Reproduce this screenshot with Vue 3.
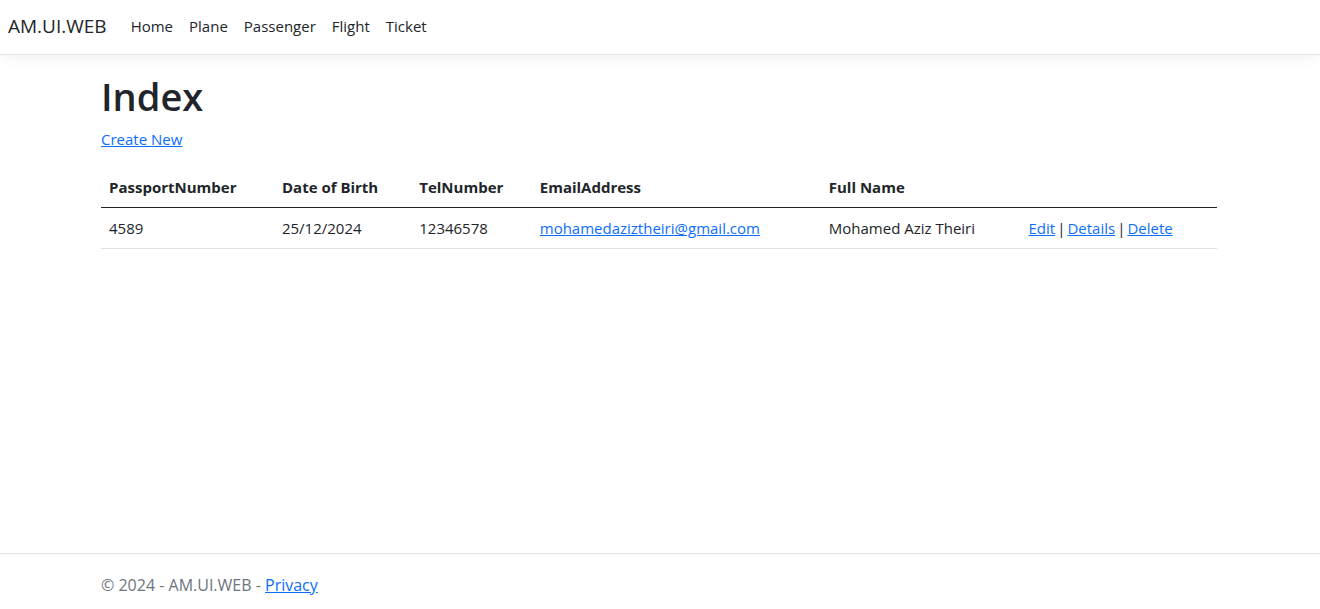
<script setup>
const links = ['Home', 'Plane', 'Passenger', 'Flight', 'Ticket']
const columns = ['PassportNumber', 'Date of Birth', 'TelNumber', 'EmailAddress', 'Full Name', '']
const passengers = [
  {
    passport: '4589',
    birth: '25/12/2024',
    tel: '12346578',
    email: 'mohamedaziztheiri@gmail.com',
    name: 'Mohamed Aziz Theiri',
  },
]
</script>

<template>
  <div class="page">
    <header class="header">
      <nav class="navbar">
        <a class="brand" href="#">AM.UI.WEB</a>
        <ul class="nav">
          <li v-for="link in links" :key="link"><a href="#">{{ link }}</a></li>
        </ul>
      </nav>
    </header>

    <main class="container">
      <h1>Index</h1>
      <p class="create"><a href="#">Create New</a></p>
      <table>
        <colgroup>
          <col class="c-passport" /><col class="c-birth" /><col class="c-tel" />
          <col class="c-email" /><col class="c-name" /><col />
        </colgroup>
        <thead>
          <tr>
            <th v-for="column in columns" :key="column" scope="col">{{ column }}</th>
          </tr>
        </thead>
        <tbody>
          <tr v-for="p in passengers" :key="p.passport">
            <td>{{ p.passport }}</td>
            <td>{{ p.birth }}</td>
            <td>{{ p.tel }}</td>
            <td><a :href="'mailto:' + p.email">{{ p.email }}</a></td>
            <td>{{ p.name }}</td>
            <td>
              <div class="actions"><a href="#">Edit</a> | <a href="#">Details</a> | <a href="#">Delete</a></div>
            </td>
          </tr>
        </tbody>
      </table>
    </main>

    <footer class="footer">
      <div class="container">© 2024 - AM.UI.WEB - <a href="#">Privacy</a></div>
    </footer>
  </div>
</template>

<style>
body {
  margin: 0;
  background: #fff;
}
</style>

<style scoped>
.page {
  display: flex;
  flex-direction: column;
  min-height: 100vh;
  color: #212529;
  font: 15px/24px "Open Sans", "Noto Sans", sans-serif;
}
a {
  color: #0d6efd;
}
.header {
  border-bottom: 1px solid #dee2e6;
  box-shadow: 0 4px 12px rgba(0, 0, 0, 0.05);
}
.navbar {
  display: flex;
  align-items: center;
  gap: 16px;
  padding: 6px 8px 8px;
}
.navbar a {
  text-decoration: none;
  color: #212529;
}
.navbar .brand {
  font-size: 19px;
  line-height: 30px;
}
.nav {
  display: flex;
  margin: 0;
  padding: 0;
  list-style: none;
}
.nav a {
  display: block;
  padding: 8px;
}
.container {
  box-sizing: border-box;
  width: 100%;
  max-width: 1140px;
  margin: 0 auto;
  padding: 0 13px 0 11px;
}
main.container {
  flex: 1;
  padding-top: 17px;
}
h1 {
  margin: 0 0 7px;
  font-size: 38px;
  line-height: 48px;
  font-weight: 600;
}
.create {
  margin: 0 0 16px;
}
table {
  width: 100%;
  border-collapse: collapse;
  table-layout: fixed;
}
.c-passport { width: 15.5%; }
.c-birth { width: 12.3%; }
.c-tel { width: 10.8%; }
.c-email { width: 25.9%; }
.c-name { width: 17.9%; }
th,
td {
  padding: 8px;
  text-align: left;
  white-space: nowrap;
  border-bottom: 1px solid #dee2e6;
}
th {
  font-weight: 700;
  border-bottom-color: #212529;
}
.actions {
  display: flex;
  gap: 2px;
  white-space: normal;
}
.footer {
  padding: 19px 0 12px;
  border-top: 1px solid #dee2e6;
  color: #6c757d;
  font-size: 16px;
}
</style>
